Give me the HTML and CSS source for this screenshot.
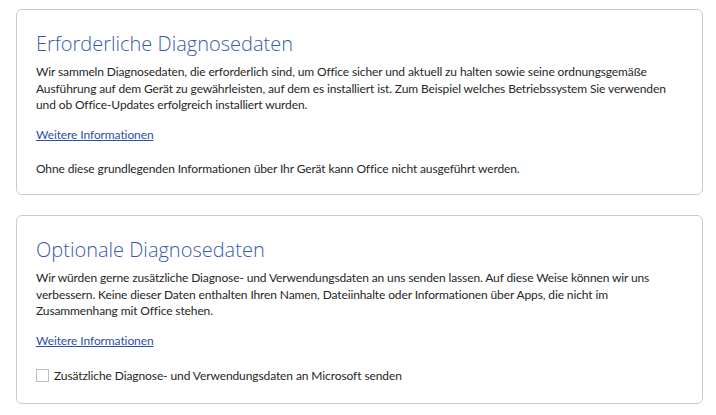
FILE: index.html
```html
<!DOCTYPE html>
<html lang="de">
<head>
<meta charset="utf-8">
<title>Diagnosedaten</title>
<link rel="stylesheet" href="styles.css">
</head>
<body>
<section class="card">
  <h2 class="title">Erforderliche Diagnosedaten</h2>
  <p class="text">Wir sammeln Diagnosedaten, die erforderlich sind, um Office sicher und aktuell zu halten sowie seine ordnungsgemäße Ausführung auf dem Gerät zu gewährleisten, auf dem es installiert ist. Zum Beispiel welches Betriebssystem Sie verwenden und ob Office-Updates erfolgreich installiert wurden.</p>
  <a class="link" href="#">Weitere Informationen</a>
  <p class="text note">Ohne diese grundlegenden Informationen über Ihr Gerät kann Office nicht ausgeführt werden.</p>
</section>
<section class="card">
  <h2 class="title">Optionale Diagnosedaten</h2>
  <p class="text">Wir würden gerne zusätzliche Diagnose- und Verwendungsdaten an uns senden lassen. Auf diese Weise können wir uns verbessern. Keine dieser Daten enthalten Ihren Namen, Dateiinhalte oder Informationen über Apps, die nicht im Zusammenhang mit Office stehen.</p>
  <a class="link" href="#">Weitere Informationen</a>
  <label class="check">
    <span class="box"></span>
    <span class="check-label">Zusätzliche Diagnose- und Verwendungsdaten an Microsoft senden</span>
  </label>
</section>
</body>
</html>
```
FILE: styles.css
```css
html, body {
  background: #ffffff;
}
body {
  margin: 9px 13px 0 16px;
  font-family: "Lato", "Open Sans", sans-serif;
  color: #262626;
}
.card {
  border: 1px solid #cacaca;
  border-radius: 6px;
  padding: 20px 19px 16px;
  margin-bottom: 20px;
  display: flex;
  flex-direction: column;
  align-items: flex-start;
}
.title {
  margin: 0;
  font-family: "Open Sans", sans-serif;
  font-weight: 350;
  font-size: 20px;
  line-height: 28px;
  color: #3a5aae;
}
.text {
  margin: 6px 0 0;
  font-size: 12px;
  line-height: 16.7px;
  letter-spacing: -0.12px;
}
.link {
  display: block;
  margin-top: 12px;
  font-size: 12px;
  line-height: 17px;
  letter-spacing: -0.1px;
  color: #2c4fa8;
  text-decoration: underline;
}
.note {
  margin-top: 18px;
}
.check {
  margin-top: 18px;
  padding-bottom: 3px;
  display: flex;
  align-items: center;
  gap: 5px;
  font-size: 12px;
  line-height: 17px;
  letter-spacing: -0.1px;
}
.box {
  width: 11px;
  height: 11px;
  border: 1px solid #bdbdbd;
  background: #fff;
}
```
